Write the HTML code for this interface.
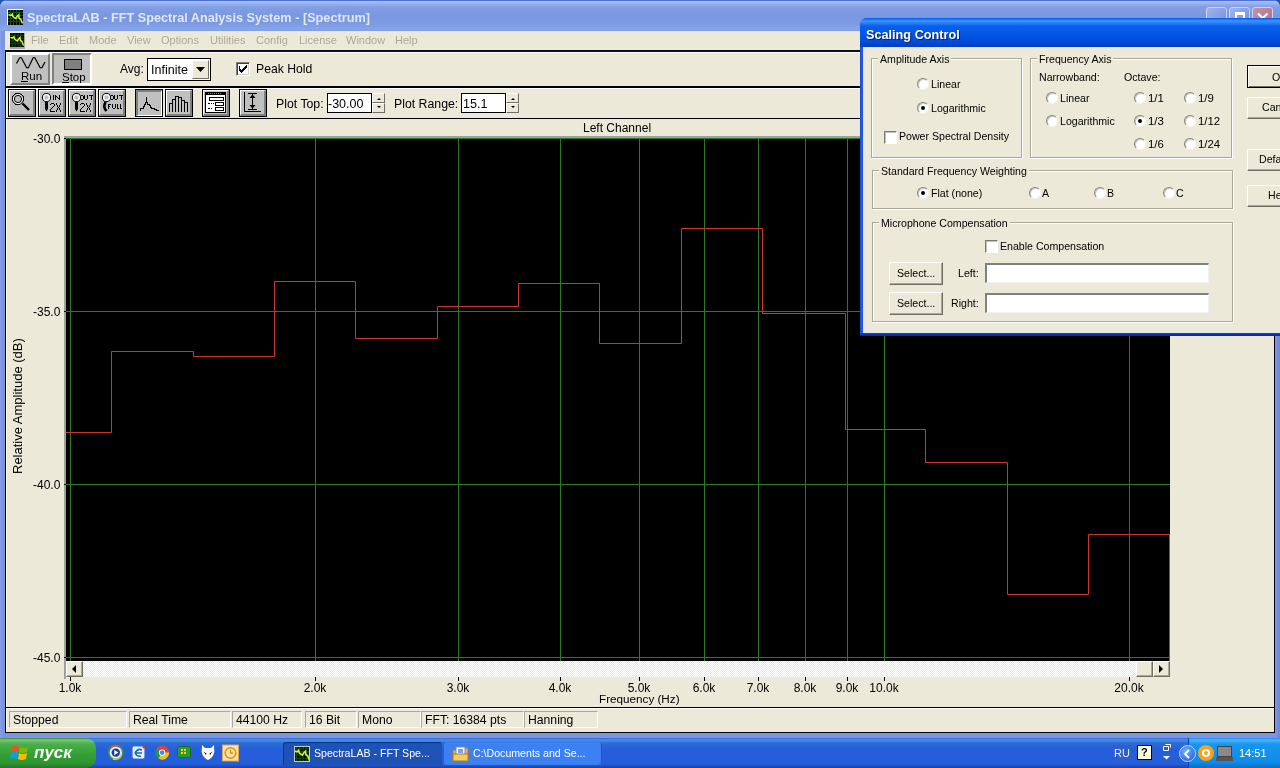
<!DOCTYPE html>
<html><head><meta charset="utf-8">
<style>
*{margin:0;padding:0;box-sizing:border-box}
html,body{width:1280px;height:768px;overflow:hidden;background:#1d58a4;font-family:"Liberation Sans",sans-serif;font-size:11px;color:#000}
.a{position:absolute}
.t{position:absolute;white-space:nowrap;line-height:1;will-change:transform}
/* main window */
#mw{left:0;top:0;width:1280px;height:738px;background:linear-gradient(90deg,#8aa2e6,#7b95df 2px,#7b95df 1276px,#6e84d8 1280px);border-radius:7px 7px 0 0}
#mtitle{left:0;top:0;width:1280px;height:31px;border-radius:7px 7px 0 0;background:linear-gradient(#4d72d2 0,#4d72d2 1px,#a9c1f2 1px,#9bb5ee 3px,#829fe5 7px,#7996e0 16px,#7d9be3 24px,#87a5e9 29px,#7f9de5 31px)}
#body{left:5px;top:31px;width:1270px;height:702px;background:#ece9d8}
.menu{color:#aca899;font-size:11px;top:35px}
.dk{background:#000}
.wb{position:absolute;top:7px;width:21px;height:21px;border:1px solid #c9d6f5;border-radius:3px;background:linear-gradient(135deg,#9fb4ef,#6f8ddf)}
</style></head><body>
<div id="mw" class="a"></div>
<div id="mtitle" class="a"></div>
<!-- title icon -->
<div class="a" style="left:7px;top:9px;width:16px;height:16px;background:#fff"></div>
<svg class="a" style="left:8px;top:10px" width="15" height="15" viewBox="0 0 15 15"><rect width="15" height="15" fill="#000"/><path d="M0 2.5H15M0 5.5H15M0 8.5H15M0 11.5H15M2.5 0V15M5.5 0V15M8.5 0V15M11.5 0V15" stroke="#0d560d" stroke-width="1"/><path d="M0.4 4.6L2.9 5.4L4.3 4.1L4.9 6.6L6.6 7.6L7.9 8.5L9.4 6L10.7 4.8L11 7.9L12.9 9.4L14.5 13.5" stroke="#d8f048" stroke-width="1.5" fill="none"/></svg>
<div class="t" style="left:27px;top:12px;font-size:12.7px;font-weight:bold;color:#dfe7fb">SpectraLAB - FFT Spectral Analysis System - [Spectrum]</div>
<!-- window buttons -->
<div class="wb" style="left:1206px"></div>
<div class="wb" style="left:1229px"><div class="a" style="left:5px;top:4px;width:10px;height:10px;border:2px solid #fff;border-top-width:3px"></div></div>
<div class="wb" style="left:1252px;background:linear-gradient(135deg,#c890a8,#b86a80)"><svg class="a" style="left:4px;top:4px" width="12" height="14"><path d="M1 1.5L10.5 11M10.5 1.5L1 11" stroke="#fff" stroke-width="2.2"/></svg></div>

<div id="body" class="a"></div>
<!-- menu bar -->
<div class="a" style="left:10px;top:33px;width:15px;height:16px;background:#a8a8a8"></div>
<svg class="a" style="left:10px;top:33px" width="14" height="14" viewBox="0 0 15 15"><rect width="15" height="15" fill="#000"/><path d="M0 2.5H15M0 5.5H15M0 8.5H15M0 11.5H15M2.5 0V15M5.5 0V15M8.5 0V15M11.5 0V15" stroke="#0d560d" stroke-width="1"/><path d="M0.4 4.6L2.9 5.4L4.3 4.1L4.9 6.6L6.6 7.6L7.9 8.5L9.4 6L10.7 4.8L11 7.9L12.9 9.4L14.5 13.5" stroke="#d8f048" stroke-width="1.5" fill="none"/></svg>
<div class="t menu" style="left:31px">File</div>
<div class="t menu" style="left:59px">Edit</div>
<div class="t menu" style="left:89px">Mode</div>
<div class="t menu" style="left:127px">View</div>
<div class="t menu" style="left:161px">Options</div>
<div class="t menu" style="left:210px">Utilities</div>
<div class="t menu" style="left:256px">Config</div>
<div class="t menu" style="left:299px">License</div>
<div class="t menu" style="left:346px">Window</div>
<div class="t menu" style="left:395px">Help</div>

<!-- MDI/child area borders -->
<div class="a dk" style="left:5px;top:50px;width:1270px;height:2px;background:#0c0c24"></div>
<div class="a dk" style="left:5px;top:50px;width:1px;height:683px"></div>
<div class="a dk" style="left:1274px;top:50px;width:1px;height:683px"></div>
<div class="a dk" style="left:5px;top:732px;width:1270px;height:1px"></div>
<div class="a" style="left:6px;top:52px;width:1268px;height:1px;background:#fff"></div>
<div class="a" style="left:6px;top:52px;width:1px;height:680px;background:#fff"></div>

<!-- toolbar 1 -->
<div class="a" style="left:10px;top:53px;width:40px;height:32px;background:#c0c0c0;border-top:2px solid #fff;border-left:2px solid #fff;border-right:2px solid #808080;border-bottom:2px solid #808080"></div>
<svg class="a" style="left:14px;top:55px" width="34" height="16"><path d="M2.5 8.5L5.5 3L6.5 2.5L7.5 3L12.5 12.5L13.5 13L14.5 12.5L19 3L20 2.5L21 3L26 12.5L27 13L28 12.5L31 7" stroke="#000" stroke-width="1.2" fill="none" stroke-linejoin="round"/></svg>
<div class="t" style="left:21px;top:71px;font-size:11.5px">Run</div>
<div class="a" style="left:21px;top:81px;width:7px;height:1px;background:#000"></div>
<div class="a" style="left:52px;top:53px;width:40px;height:32px;background:#c0c0c0;border-top:2px solid #808080;border-left:2px solid #808080;border-right:2px solid #fff;border-bottom:2px solid #fff"></div>
<div class="a" style="left:64px;top:59px;width:18px;height:11px;background:#808080;border:1px solid #000"></div>
<div class="t" style="left:61.5px;top:72px;font-size:11.5px">Stop</div>
<div class="a" style="left:62px;top:82px;width:7px;height:1px;background:#000"></div>

<div class="t" style="left:120px;top:63px;font-size:12px">Avg:</div>
<div class="a" style="left:147px;top:58px;width:64px;height:23px;border:1px solid #000;background:#fff"></div>
<div class="t" style="left:151px;top:64px;font-size:12.5px">Infinite</div>
<div class="a" style="left:192px;top:60px;width:17px;height:19px;background:#ece9d8;border-top:1px solid #fff;border-left:1px solid #fff;border-right:1px solid #716f64;border-bottom:1px solid #716f64"></div>
<svg class="a" style="left:196px;top:67px" width="9" height="5"><path d="M0 0H9L4.5 5Z" fill="#000"/></svg>
<div class="a" style="left:236px;top:62px;width:14px;height:14px;background:#fff;border-top:1px solid #808080;border-left:1px solid #808080;border-right:1px solid #fff;border-bottom:1px solid #fff;box-shadow:inset 1px 1px 0 #404040,inset -1px -1px 0 #d4d0c8"></div>
<svg class="a" style="left:237px;top:62px" width="12" height="12" shape-rendering="crispEdges"><path d="M2 4h1v3h1v1h1v-1h1v-1h1v-1h1v-1h1v-1h1v3h-1v1h-1v1h-1v1h-1v1h-1v1h-1v-1h-1v-1h-1z" fill="#000"/></svg>
<div class="t" style="left:256px;top:63px;font-size:12.2px">Peak Hold</div>

<div class="a dk" style="left:6px;top:86px;width:1268px;height:2px"></div>
<div class="a" style="left:6px;top:88px;width:1268px;height:1px;background:#fff"></div>

<!-- toolbar 2 -->
<style>
.ib{position:absolute;top:89px;width:28px;height:28px;border:1px solid #000;background:#c0c0c0}
.ib .in{position:absolute;left:0;top:0;width:26px;height:26px;border-top:1px solid #fff;border-left:1px solid #fff;border-right:2px solid #808080;border-bottom:2px solid #808080}
.ib.dn .in{border-top:2px solid #808080;border-left:2px solid #808080;border-right:1px solid #fff;border-bottom:1px solid #fff}
.spin{position:absolute;top:93px;width:13px;height:20px}
.spin div{position:absolute;left:0;width:13px;height:10px;background:#ece9d8;border-top:1px solid #fff;border-left:1px solid #fff;border-right:1px solid #716f64;border-bottom:1px solid #716f64}
</style>
<div class="ib" style="left:8px"><div class="in"></div><svg class="a" style="left:-1px;top:-1px" width="28" height="28" shape-rendering="crispEdges">
 <path d="M7 4.5H12M5.5 5.5H7M12 5.5H13.5M4.5 7V12M15.5 7V12M5.5 13.5H7M12 13.5H13.5M7 15.5H12M5 6.5H6M14 6.5H15M5 12.5H6M14 12.5H15" stroke="#000"/>
 <circle cx="10" cy="10" r="4.6" fill="none" stroke="#fff" stroke-width="1.6" shape-rendering="auto"/>
 <circle cx="10" cy="10" r="3.6" fill="none" stroke="#000" stroke-width="1" shape-rendering="auto"/>
 <circle cx="10" cy="10" r="5.6" fill="none" stroke="#000" stroke-width="1" shape-rendering="auto"/>
 <path d="M14.5 14.5L21 21" stroke="#000" stroke-width="2.4" shape-rendering="auto"/></svg></div>
<div class="ib" style="left:38px"><div class="in"></div><svg class="a" style="left:-1px;top:-1px" width="28" height="28" shape-rendering="crispEdges">
 <circle cx="8.5" cy="8.5" r="4" fill="none" stroke="#000" stroke-width="1.2" shape-rendering="auto"/>
 <circle cx="8.5" cy="8.5" r="2.9" fill="none" stroke="#fff" stroke-width="1.3" shape-rendering="auto"/>
 <path d="M7 13H10V20L8.5 22.5L7 20Z" fill="#000" shape-rendering="auto"/>
 <path d="M15 6h1v1h-1zM17 6h1v1h-1zM21 6h1v1h-1zM15 7h1v1h-1zM17 7h2v1h-2zM21 7h1v1h-1zM15 8h1v1h-1zM17 8h1v1h-1zM19 8h1v1h-1zM21 8h1v1h-1zM15 9h1v1h-1zM17 9h1v1h-1zM20 9h2v1h-2zM15 10h1v1h-1zM17 10h1v1h-1zM21 10h1v1h-1z" fill="#000"/><path d="M13 14h3v1h-3zM12 15h1v1h-1zM16 15h1v1h-1zM16 16h1v1h-1zM15 17h1v1h-1zM14 18h1v1h-1zM13 19h1v1h-1zM12 20h1v1h-1zM12 21h1v1h-1zM12 22h5v1h-5z" fill="#000"/><path d="M18 14h1v1h-1zM22 14h1v1h-1zM18 15h1v1h-1zM22 15h1v1h-1zM19 16h1v1h-1zM21 16h1v1h-1zM19 17h1v1h-1zM21 17h1v1h-1zM20 18h1v1h-1zM19 19h1v1h-1zM21 19h1v1h-1zM19 20h1v1h-1zM21 20h1v1h-1zM18 21h1v1h-1zM22 21h1v1h-1zM18 22h1v1h-1zM22 22h1v1h-1z" fill="#000"/></svg></div>
<div class="ib" style="left:68px"><div class="in"></div><svg class="a" style="left:-1px;top:-1px" width="28" height="28" shape-rendering="crispEdges">
 <circle cx="8.5" cy="8.5" r="4" fill="none" stroke="#000" stroke-width="1.2" shape-rendering="auto"/>
 <circle cx="8.5" cy="8.5" r="2.9" fill="none" stroke="#fff" stroke-width="1.3" shape-rendering="auto"/>
 <path d="M7 13H10V20L8.5 22.5L7 20Z" fill="#000" shape-rendering="auto"/>
 <path d="M13 6h2v1h-2zM16 6h1v1h-1zM19 6h1v1h-1zM21 6h4v1h-4zM12 7h1v1h-1zM15 7h2v1h-2zM19 7h1v1h-1zM23 7h1v1h-1zM12 8h1v1h-1zM15 8h2v1h-2zM19 8h1v1h-1zM23 8h1v1h-1zM12 9h1v1h-1zM15 9h2v1h-2zM19 9h1v1h-1zM23 9h1v1h-1zM13 10h2v1h-2zM17 10h2v1h-2zM23 10h1v1h-1z" fill="#000"/><path d="M13 14h3v1h-3zM12 15h1v1h-1zM16 15h1v1h-1zM16 16h1v1h-1zM15 17h1v1h-1zM14 18h1v1h-1zM13 19h1v1h-1zM12 20h1v1h-1zM12 21h1v1h-1zM12 22h5v1h-5z" fill="#000"/><path d="M18 14h1v1h-1zM22 14h1v1h-1zM18 15h1v1h-1zM22 15h1v1h-1zM19 16h1v1h-1zM21 16h1v1h-1zM19 17h1v1h-1zM21 17h1v1h-1zM20 18h1v1h-1zM19 19h1v1h-1zM21 19h1v1h-1zM19 20h1v1h-1zM21 20h1v1h-1zM18 21h1v1h-1zM22 21h1v1h-1zM18 22h1v1h-1zM22 22h1v1h-1z" fill="#000"/></svg></div>
<div class="ib" style="left:98px"><div class="in"></div><svg class="a" style="left:-1px;top:-1px" width="28" height="28" shape-rendering="crispEdges">
 <circle cx="8.5" cy="8.5" r="4" fill="none" stroke="#000" stroke-width="1.2" shape-rendering="auto"/>
 <circle cx="8.5" cy="8.5" r="2.9" fill="none" stroke="#fff" stroke-width="1.3" shape-rendering="auto"/>
 <path d="M7.5 13Q5.5 17 7 20L8.5 22" stroke="#000" stroke-width="2.6" fill="none" shape-rendering="auto"/>
 <path d="M13 6h2v1h-2zM16 6h1v1h-1zM19 6h1v1h-1zM21 6h4v1h-4zM12 7h1v1h-1zM15 7h2v1h-2zM19 7h1v1h-1zM23 7h1v1h-1zM12 8h1v1h-1zM15 8h2v1h-2zM19 8h1v1h-1zM23 8h1v1h-1zM12 9h1v1h-1zM15 9h2v1h-2zM19 9h1v1h-1zM23 9h1v1h-1zM13 10h2v1h-2zM17 10h2v1h-2zM23 10h1v1h-1z" fill="#000"/><path d="M10 15h3v1h-3zM14 15h1v1h-1zM17 15h1v1h-1zM19 15h1v1h-1zM22 15h1v1h-1zM10 16h1v1h-1zM14 16h1v1h-1zM17 16h1v1h-1zM19 16h1v1h-1zM22 16h1v1h-1zM10 17h2v1h-2zM14 17h1v1h-1zM17 17h1v1h-1zM19 17h1v1h-1zM22 17h1v1h-1zM10 18h1v1h-1zM14 18h1v1h-1zM17 18h1v1h-1zM19 18h1v1h-1zM22 18h1v1h-1zM10 19h1v1h-1zM15 19h2v1h-2zM19 19h2v1h-2zM22 19h2v1h-2z" fill="#000"/></svg></div>
<div class="ib dn" style="left:135px"><div class="in"></div><svg class="a" style="left:-1px;top:-1px" width="28" height="28" shape-rendering="crispEdges">
 <path d="M5.5 22V19.5H8.5V17.5H9.5V15.5H10.5V13.5H11.5V8M11.5 13.5H12.5V15.5H14.5V16.5H15.5V18.5H16.5V19.5H19.5V20.5H21.5V21.5H24" stroke="#000" stroke-width="1.2" fill="none"/></svg></div>
<div class="ib" style="left:165px"><div class="in"></div><svg class="a" style="left:-1px;top:-1px" width="28" height="28" shape-rendering="crispEdges">
 <path d="M4.5 23V14.5H7.5V23M7.5 14.5V10.5H10.5V23M10.5 10.5V7.5H13.5V23M13.5 8.5H16.5V23M16.5 11.5H19.5V23M19.5 13.5H22.5V23" stroke="#000" stroke-width="1.2" fill="none"/></svg></div>
<div class="ib" style="left:202px"><div class="in"></div><svg class="a" style="left:-1px;top:-1px" width="28" height="28" shape-rendering="crispEdges">
 <rect x="3.5" y="3.5" width="20" height="20" fill="#fff" stroke="#000" stroke-width="1.4"/>
 <rect x="3" y="3" width="21" height="3" fill="#000"/>
 <path d="M6 4.5H20" stroke="#888" stroke-dasharray="1 1"/>
 <rect x="7.5" y="8.5" width="14" height="3" fill="none" stroke="#000" stroke-width="1.2"/>
 <rect x="13.5" y="13.5" width="8" height="3" fill="none" stroke="#000" stroke-width="1.2"/>
 <rect x="13.5" y="18.5" width="8" height="3" fill="none" stroke="#000" stroke-width="1.2"/>
 <path d="M6 14.5H8M9 14.5H10M11 14.5H12M6 19.5H8M9 19.5H10" stroke="#000"/></svg></div>
<div class="ib" style="left:239px"><div class="in"></div><svg class="a" style="left:-1px;top:-1px" width="28" height="28" shape-rendering="crispEdges">
 <path d="M5.5 3V22.5H22" stroke="#000" stroke-width="1.3" fill="none"/>
 <path d="M9 4.5H18M9 20.5H18M13.5 5V20" stroke="#000" stroke-width="1.3"/>
 <path d="M10.5 9L13.5 5.5L16.5 9ZM10.5 16L13.5 19.5L16.5 16Z" fill="#000" shape-rendering="auto"/></svg></div>
<div class="t" style="left:276px;top:98px;font-size:12.3px">Plot Top:</div>
<div class="a" style="left:327px;top:93px;width:45px;height:20px;border:1px solid #000;background:#fff"></div>
<div class="t" style="left:328px;top:98px;font-size:12.5px">-30.00</div>
<div class="spin" style="left:372px"><div style="top:0"></div><div style="top:10px"></div></div>
<div class="t" style="left:394px;top:98px;font-size:12.3px">Plot Range:</div>
<div class="a" style="left:461px;top:93px;width:45px;height:20px;border:1px solid #000;background:#fff"></div>
<div class="t" style="left:463px;top:98px;font-size:12.5px">15.1</div>
<div class="spin" style="left:506px"><div style="top:0"></div><div style="top:10px"></div></div>
<svg class="a" style="left:374px;top:94px" width="10" height="18"><path d="M3 6H7L5 4Z M3 12H7L5 14Z" fill="#000"/></svg>
<svg class="a" style="left:508px;top:94px" width="10" height="18"><path d="M3 6H7L5 4Z M3 12H7L5 14Z" fill="#000"/></svg>


<div class="a dk" style="left:6px;top:118px;width:1268px;height:1px"></div>

<!-- chart -->
<svg class="a" style="left:0;top:0" width="1280" height="768" shape-rendering="crispEdges">
  <rect x="64" y="136" width="1106" height="2" fill="#a0a0a0"/>
  <rect x="64" y="136" width="2" height="543" fill="#a0a0a0"/>
  <rect x="66" y="138" width="1104" height="523" fill="#000"/>
  <g fill="#2a7a2a">
    <rect x="66" y="138" width="1104" height="1"/>
    <rect x="66" y="311" width="1104" height="1"/>
    <rect x="66" y="484" width="1104" height="1"/>
    <rect x="66" y="657" width="1104" height="1"/>
    <rect x="70" y="138" width="1" height="523"/>
    <rect x="315" y="138" width="1" height="523"/>
    <rect x="458" y="138" width="1" height="523"/>
    <rect x="560" y="138" width="1" height="523"/>
    <rect x="639" y="138" width="1" height="523"/>
    <rect x="704" y="138" width="1" height="523"/>
    <rect x="758" y="138" width="1" height="523"/>
    <rect x="805" y="138" width="1" height="523"/>
    <rect x="847" y="138" width="1" height="523"/>
    <rect x="884" y="138" width="1" height="523"/>
    <rect x="1129" y="138" width="1" height="523"/>
  </g>
  <path d="M66 432.5H111.5V351.5H193.5V356.5H274.5V281.5H355.5V338.5H437.5V306.5H518.5V283.5H599.5V343.5H681.5V228.5H762.5V313.5H845.5V429.5H925.5V462.5H1007.5V594.5H1088.5V534.5H1169.5V661" stroke="#cf3434" stroke-width="1" fill="none" shape-rendering="auto"/>
  <g fill="#000">
    <rect x="64" y="138" width="2" height="1"/>
    <rect x="64" y="311" width="2" height="1"/>
    <rect x="64" y="484" width="2" height="1"/>
    <rect x="64" y="657" width="2" height="1"/>
  </g>
</svg>
<div class="t" style="left:583px;top:122px;font-size:12px">Left Channel</div>
<div class="t" style="right:1220px;top:133px;font-size:12px">-30.0</div>
<div class="t" style="right:1220px;top:306px;font-size:12px">-35.0</div>
<div class="t" style="right:1220px;top:479px;font-size:12px">-40.0</div>
<div class="t" style="right:1220px;top:652px;font-size:12px">-45.0</div>
<div class="t" style="left:11px;top:405px;font-size:13px;transform-origin:0 0;transform:rotate(-90deg) translate(-69px,0)">Relative Amplitude (dB)</div>

<div class="t" style="left:30px;width:80px;text-align:center;top:682px;font-size:12px">1.0k</div>
<div class="a dk" style="left:70px;top:677px;width:1px;height:4px"></div>
<div class="t" style="left:275px;width:80px;text-align:center;top:682px;font-size:12px">2.0k</div>
<div class="a dk" style="left:315px;top:677px;width:1px;height:4px"></div>
<div class="t" style="left:418px;width:80px;text-align:center;top:682px;font-size:12px">3.0k</div>
<div class="a dk" style="left:458px;top:677px;width:1px;height:4px"></div>
<div class="t" style="left:520px;width:80px;text-align:center;top:682px;font-size:12px">4.0k</div>
<div class="a dk" style="left:560px;top:677px;width:1px;height:4px"></div>
<div class="t" style="left:599px;width:80px;text-align:center;top:682px;font-size:12px">5.0k</div>
<div class="a dk" style="left:639px;top:677px;width:1px;height:4px"></div>
<div class="t" style="left:664px;width:80px;text-align:center;top:682px;font-size:12px">6.0k</div>
<div class="a dk" style="left:704px;top:677px;width:1px;height:4px"></div>
<div class="t" style="left:718px;width:80px;text-align:center;top:682px;font-size:12px">7.0k</div>
<div class="a dk" style="left:758px;top:677px;width:1px;height:4px"></div>
<div class="t" style="left:765px;width:80px;text-align:center;top:682px;font-size:12px">8.0k</div>
<div class="a dk" style="left:805px;top:677px;width:1px;height:4px"></div>
<div class="t" style="left:807px;width:80px;text-align:center;top:682px;font-size:12px">9.0k</div>
<div class="a dk" style="left:847px;top:677px;width:1px;height:4px"></div>
<div class="t" style="left:844px;width:80px;text-align:center;top:682px;font-size:12px">10.0k</div>
<div class="a dk" style="left:884px;top:677px;width:1px;height:4px"></div>
<div class="t" style="left:1089px;width:80px;text-align:center;top:682px;font-size:12px">20.0k</div>
<div class="a dk" style="left:1129px;top:677px;width:1px;height:4px"></div>
<div class="t" style="left:599px;top:693px;font-size:11.7px">Frequency (Hz)</div>
<div class="a" style="left:66px;top:661px;width:1104px;height:16px;background-color:#f4f3ee;background-image:repeating-conic-gradient(#fff 0 25%,#ece9d8 0 50%);background-size:2px 2px"></div>
<div class="a" style="left:66px;top:661px;width:17px;height:16px;background:#ece9d8;border-top:1px solid #fff;border-left:1px solid #fff;border-right:1px solid #716f64;border-bottom:1px solid #716f64;box-shadow:inset -1px -1px 0 #aca899"></div>
<svg class="a" style="left:71px;top:665px" width="6" height="8"><path d="M5 0V8L1 4Z" fill="#000"/></svg>
<div class="a" style="left:1136px;top:661px;width:17px;height:16px;background:#ece9d8;border-top:1px solid #fff;border-left:1px solid #fff;border-right:1px solid #716f64;border-bottom:1px solid #716f64;box-shadow:inset -1px -1px 0 #aca899"></div>
<div class="a" style="left:1153px;top:661px;width:17px;height:16px;background:#ece9d8;border-top:1px solid #fff;border-left:1px solid #fff;border-right:1px solid #716f64;border-bottom:1px solid #716f64;box-shadow:inset -1px -1px 0 #aca899"></div>
<svg class="a" style="left:1158px;top:665px" width="6" height="8"><path d="M1 0V8L5 4Z" fill="#000"/></svg>


<!-- dialog -->
<style>
.gb{position:absolute;border:1px solid #aca899;box-shadow:inset 1px 1px 0 #fff,1px 1px 0 #fff}
.gt{will-change:transform;position:absolute;background:#ece9d8;padding:0 2px;font-size:10.6px;white-space:nowrap;line-height:1}
.rd{position:absolute;width:12px;height:12px;border-radius:50%;background:#fff;border:1px solid;border-color:#85857a #f4f3ee #f4f3ee #85857a;box-shadow:inset 1px 1px 0 #cfcdc2}
.rd.on::after{content:"";position:absolute;left:3px;top:3px;width:4px;height:4px;border-radius:50%;background:#000}
.lb{will-change:transform;position:absolute;font-size:10.6px;white-space:nowrap;line-height:1}
.cb{position:absolute;width:13px;height:13px;background:#fff;border-top:1px solid #7a7a70;border-left:1px solid #7a7a70;border-right:1px solid #fff;border-bottom:1px solid #fff;box-shadow:inset 1px 1px 0 #c4c2b8}
.bt{will-change:transform;position:absolute;background:#ece9d8;border-top:1px solid #fff;border-left:1px solid #fff;border-right:1px solid #716f64;border-bottom:1px solid #716f64;box-shadow:inset -1px -1px 0 #aca899;font-size:10.6px;white-space:nowrap;line-height:1}
</style>
<div class="a" style="left:860px;top:18px;width:430px;height:318px;background:linear-gradient(90deg,#1846d0,#2a5ee8 2px,#1c50e0 3px);border-radius:7px 7px 0 0"></div>
<div class="a" style="left:860px;top:18px;width:430px;height:29px;border-radius:7px 7px 0 0;background:linear-gradient(#0058ee 0,#3d95ff 3px,#0a5fe8 8px,#0055e5 18px,#0049d6 25px,#003dc0 29px)"></div>
<div class="t" style="left:866px;top:29px;font-size:12.7px;font-weight:bold;color:#fff;text-shadow:1px 1px 0 #0a1e6e">Scaling Control</div>
<div class="a" style="left:860px;top:333px;width:430px;height:3px;background:linear-gradient(#1a3fc0,#0a2592)"></div>
<div class="a" style="left:863px;top:47px;width:420px;height:286px;background:#ece9d8;box-shadow:inset 1px 0 0 #dce8fa,inset 0 -1px 0 #dce8fa"></div>

<div class="gb" style="left:871px;top:58px;width:151px;height:100px"></div>
<div class="gt" style="left:878px;top:54px">Amplitude Axis</div>
<div class="rd" style="left:917px;top:78px"></div><div class="lb" style="left:931px;top:79px">Linear</div>
<div class="rd on" style="left:917px;top:102px"></div><div class="lb" style="left:931px;top:103px">Logarithmic</div>
<div class="cb" style="left:884px;top:131px"></div><div class="lb" style="left:899px;top:131px">Power Spectral Density</div>

<div class="gb" style="left:1030px;top:58px;width:202px;height:100px"></div>
<div class="gt" style="left:1037px;top:54px">Frequency Axis</div>
<div class="lb" style="left:1039px;top:72px">Narrowband:</div>
<div class="lb" style="left:1124px;top:72px">Octave:</div>
<div class="rd" style="left:1046px;top:92px"></div><div class="lb" style="left:1060px;top:93px">Linear</div>
<div class="rd" style="left:1046px;top:115px"></div><div class="lb" style="left:1060px;top:116px">Logarithmic</div>
<div class="rd" style="left:1134px;top:92px"></div><div class="lb" style="left:1148px;top:93px;font-size:11.4px">1/1</div>
<div class="rd on" style="left:1134px;top:115px"></div><div class="lb" style="left:1148px;top:116px;font-size:11.4px">1/3</div>
<div class="rd" style="left:1134px;top:138px"></div><div class="lb" style="left:1148px;top:139px;font-size:11.4px">1/6</div>
<div class="rd" style="left:1184px;top:92px"></div><div class="lb" style="left:1198px;top:93px;font-size:11.4px">1/9</div>
<div class="rd" style="left:1184px;top:115px"></div><div class="lb" style="left:1198px;top:116px;font-size:11.4px">1/12</div>
<div class="rd" style="left:1184px;top:138px"></div><div class="lb" style="left:1198px;top:139px;font-size:11.4px">1/24</div>

<div class="gb" style="left:872px;top:170px;width:361px;height:39px"></div>
<div class="gt" style="left:879px;top:166px">Standard Frequency Weighting</div>
<div class="rd on" style="left:917px;top:187px"></div><div class="lb" style="left:931px;top:188px">Flat (none)</div>
<div class="rd" style="left:1029px;top:187px"></div><div class="lb" style="left:1042px;top:188px">A</div>
<div class="rd" style="left:1094px;top:187px"></div><div class="lb" style="left:1107px;top:188px">B</div>
<div class="rd" style="left:1163px;top:187px"></div><div class="lb" style="left:1176px;top:188px">C</div>

<div class="gb" style="left:872px;top:222px;width:361px;height:100px"></div>
<div class="gt" style="left:879px;top:218px">Microphone Compensation</div>
<div class="cb" style="left:985px;top:240px"></div><div class="lb" style="left:1000px;top:241px">Enable Compensation</div>
<div class="bt" style="left:889px;top:262px;width:54px;height:23px;padding:5px 0 0 7px">Select...</div>
<div class="bt" style="left:889px;top:292px;width:54px;height:23px;padding:5px 0 0 7px">Select...</div>
<div class="lb" style="left:958px;top:268px">Left:</div>
<div class="lb" style="left:951px;top:298px">Right:</div>
<div class="a" style="left:985px;top:263px;width:224px;height:20px;background:#fff;border-top:2px solid #808080;border-left:2px solid #808080;border-right:1px solid #f0f0f0;border-bottom:1px solid #f0f0f0"></div>
<div class="a" style="left:985px;top:293px;width:224px;height:20px;background:#fff;border-top:2px solid #808080;border-left:2px solid #808080;border-right:1px solid #f0f0f0;border-bottom:1px solid #f0f0f0"></div>

<div class="bt" style="left:1247px;top:65px;width:70px;height:23px;border:1px solid #000;box-shadow:inset 1px 1px 0 #fff,inset -1px -1px 0 #716f64;padding:6px 0 0 24px">OK</div>
<div class="bt" style="left:1247px;top:97px;width:70px;height:22px;padding:4px 0 0 14px">Cancel</div>
<div class="bt" style="left:1247px;top:149px;width:70px;height:22px;padding:4px 0 0 11px">Defaults</div>
<div class="bt" style="left:1247px;top:185px;width:70px;height:22px;padding:4px 0 0 20px">Help</div>
<!-- status bar -->
<div class="a dk" style="left:6px;top:707px;width:1268px;height:1px"></div>
<div class="a" style="left:6px;top:708px;width:1268px;height:1px;background:#fff"></div>
<style>.sp{will-change:transform;position:absolute;top:711px;height:17px;border-top:1px solid #aca899;border-left:1px solid #aca899;border-right:1px solid #fff;border-bottom:1px solid #fff;font-size:12.2px;padding:2px 0 0 3px;white-space:nowrap;line-height:1}</style>
<div class="sp" style="left:9px;width:118px">Stopped</div>
<div class="sp" style="left:129px;width:102px">Real Time</div>
<div class="sp" style="left:232px;width:70px">44100 Hz</div>
<div class="sp" style="left:305px;width:52px">16 Bit</div>
<div class="sp" style="left:358px;width:63px">Mono</div>
<div class="sp" style="left:421px;width:103px">FFT: 16384 pts</div>
<div class="sp" style="left:524px;width:74px">Hanning</div>

<!-- taskbar -->
<div class="a" style="left:0;top:738px;width:1280px;height:30px;background:linear-gradient(#3168d5 0,#4993e6 2px,#2e6ad8 5px,#245edb 12px,#245edb 26px,#1941a5 30px)"></div>
<div class="a" style="left:0;top:738px;width:96px;height:30px;border-radius:0 10px 10px 0;background:linear-gradient(#3d8f3d 0,#79c779 2px,#4bae4b 6px,#34a034 16px,#2f962f 25px,#26752a 30px)"></div>
<svg class="a" style="left:10px;top:743px" width="20" height="20"><path d="M2 4Q5 2 9 4L8 9Q5 7 1 9Z" fill="#f25022"/><path d="M10 4Q14 6 18 4L17 9Q13 11 9 9Z" fill="#7fba00"/><path d="M1 10Q5 8 8 10L7 16Q4 14 0 16Z" fill="#00a4ef"/><path d="M9 10Q13 12 17 10L16 16Q12 18 8 16Z" fill="#ffb900"/></svg>
<div class="t" style="left:34px;top:744px;font-size:17px;font-weight:bold;font-style:italic;color:#fff">пуск</div>
<svg class="a" style="left:100px;top:738px" width="145" height="30">
 <circle cx="15.8" cy="14.6" r="7" fill="#dfe8f8" stroke="#3a9c3a" stroke-width="1.6"/>
 <path d="M10.3 10A7 7 0 0 1 20 9" stroke="#e04a2a" stroke-width="1.6" fill="none"/>
 <path d="M21.5 17A7 7 0 0 1 13 21" stroke="#e8c030" stroke-width="1.6" fill="none"/>
 <circle cx="15.8" cy="14.6" r="4.2" fill="#1a3aa0"/>
 <path d="M14.3 12V17.2L18.4 14.6Z" fill="#fff"/>
 <rect x="32" y="8" width="13" height="13" rx="2" fill="#e8f2ff" stroke="#2a6ad8" stroke-width="1.2"/>
 <path d="M35 15Q38 10 42 12M35 15H42M35 15Q37 19 41 18" stroke="#2060c0" stroke-width="1.6" fill="none"/>
 <circle cx="44" cy="9" r="1.5" fill="#e03020"/>
 <circle cx="62.1" cy="14.6" r="7" fill="#db4437"/>
 <path d="M62.1 14.6L55.9 11.3A7 7 0 0 0 58.5 20.6Z" fill="#0f9d58"/>
 <path d="M62.1 14.6L58.5 20.6A7 7 0 0 0 69.1 14.6Z" fill="#f4c20d"/>
 <circle cx="62.1" cy="14.6" r="3.2" fill="#fff"/>
 <circle cx="62.1" cy="14.6" r="2.3" fill="#4285f4"/>
 <rect x="77.5" y="8.5" width="13" height="11" rx="2" fill="#2c9a2c" stroke="#1d6d1d"/>
 <path d="M81 11h2v2h-2zM84 11h2v2h-2zM81 14h2v2h-2zM84 14h2v2h-2z" fill="#f0d040"/>
 <path d="M102 7L105 10H111L114 7L114.3 14Q113 20 108 22Q103 20 101.7 14Z" fill="#fff"/>
 <path d="M103.5 13.5L106.5 15.5L106 17ZM112.5 13.5L109.5 15.5L110 17Z" fill="#000"/>
 <rect x="122.5" y="7" width="16" height="16" fill="#ffe3a8" stroke="#d9a550"/>
 <circle cx="130.5" cy="15" r="5.3" fill="none" stroke="#e0900a" stroke-width="1.5"/>
 <path d="M130.5 11.5V15H133" stroke="#e0900a" stroke-width="1.3" fill="none"/>
</svg>
<div class="a" style="left:283px;top:742px;width:159px;height:24px;border-radius:3px;background:#1e52b7;box-shadow:inset 1px 1px 1px #0b3a8e"></div>
<svg class="a" style="left:294px;top:746px" width="16" height="16" viewBox="0 0 15 15"><rect width="15" height="15" fill="#000"/><path d="M0 2.5H15M0 5.5H15M0 8.5H15M0 11.5H15M2.5 0V15M5.5 0V15M8.5 0V15M11.5 0V15" stroke="#0d560d" stroke-width="1"/><path d="M0.4 4.6L2.9 5.4L4.3 4.1L4.9 6.6L6.6 7.6L7.9 8.5L9.4 6L10.7 4.8L11 7.9L12.9 9.4L14.5 13.5" stroke="#d8f048" stroke-width="1.5" fill="none"/><rect x="0.5" y="0.5" width="14" height="14" fill="none" stroke="#c8c8c8"/></svg>
<div class="t" style="left:314px;top:748px;font-size:10.6px;color:#fff">SpectraLAB - FFT Spe...</div>
<div class="a" style="left:444px;top:742px;width:158px;height:24px;border-radius:3px;background:#3c81f3;box-shadow:inset -1px -1px 1px #1f54c2"></div>
<svg class="a" style="left:452px;top:745px" width="18" height="18"><path d="M1 5H7L8 3H16V16H1Z" fill="#e8b848" stroke="#b07820"/><rect x="4" y="2" width="9" height="9" fill="#fff" stroke="#6a8cc8"/><rect x="6" y="4" width="5" height="4" fill="#7aa0e0"/><path d="M1 9H16V16H1Z" fill="#f4cc60" stroke="#b07820"/></svg>
<div class="t" style="left:473px;top:748px;font-size:10.6px;color:#fff">C:\Documents and Se...</div>
<!-- tray -->
<div class="a" style="left:1188px;top:738px;width:92px;height:30px;background:linear-gradient(#1d8fef 0,#4fb3fa 2px,#1796ee 6px,#0f8be8 24px,#0d6bc8 30px);border-left:1px solid #1042af"></div>
<div class="a" style="left:1113px;top:745px;width:18px;height:17px;background:#2d5fcf"></div><div class="t" style="left:1114px;top:748px;font-size:11px;color:#e8f0ff">RU</div>
<div class="a" style="left:1137px;top:745px;width:15px;height:15px;background:#ffffe0;border:1px solid #000"></div>
<div class="t" style="left:1141px;top:747px;font-size:11px;font-weight:bold">?</div>
<svg class="a" style="left:1162px;top:743px" width="10" height="9"><path d="M3.5 1.5H8.5V4.5M1.5 3.5H6.5V7.5H1.5Z" stroke="#fff" fill="none"/></svg>
<svg class="a" style="left:1163px;top:756px" width="7" height="4"><path d="M0 0H7L3.5 3.5Z" fill="#fff"/></svg>
<div class="a" style="left:1179px;top:745px;width:17px;height:17px;border-radius:50%;background:radial-gradient(circle at 40% 35%,#6fb0ff,#1a5ad0);border:1px solid #b8d8ff"></div>
<svg class="a" style="left:1183px;top:749px" width="10" height="10"><path d="M6 1L2 5L6 9" stroke="#fff" stroke-width="2" fill="none"/></svg>
<div class="a" style="left:1198px;top:745px;width:16px;height:16px;border-radius:50%;background:#f7a21b"></div>
<div class="a" style="left:1202px;top:749px;width:8px;height:8px;border-radius:50%;border:2px solid #fff"></div>
<div class="a" style="left:1217px;top:746px;width:15px;height:11px;background:#8a8a8a;border:1px solid #444"></div>
<div class="a" style="left:1216px;top:757px;width:17px;height:4px;background:#555"></div>
<div class="t" style="left:1239px;top:748px;font-size:11px;color:#fff">14:51</div>
</body></html>
